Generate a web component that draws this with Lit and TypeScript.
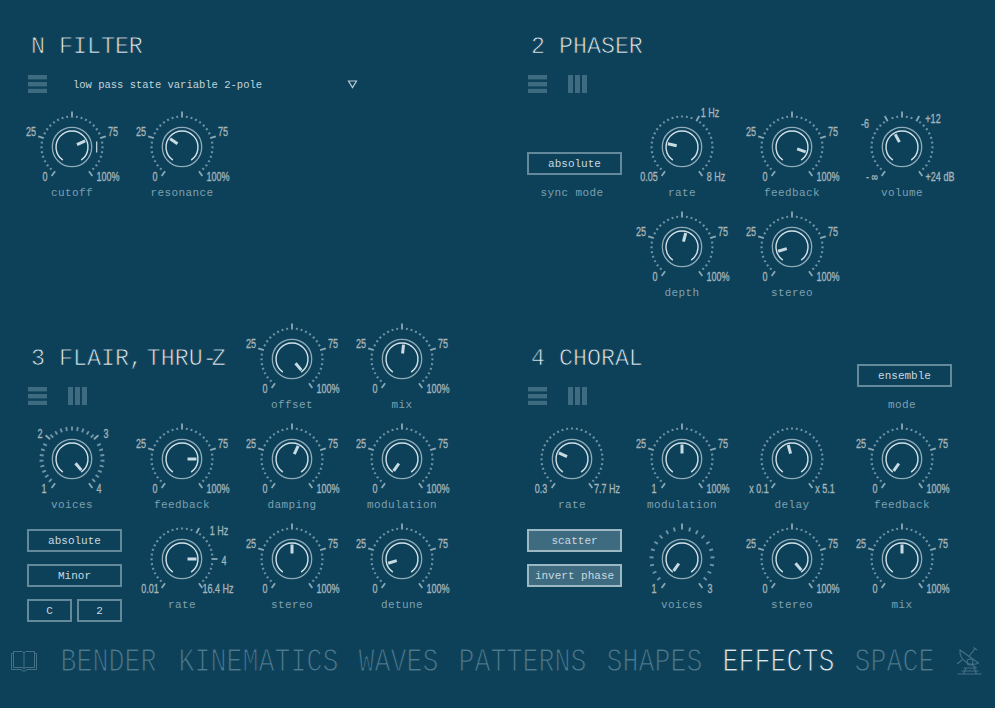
import { LitElement, html, css, svg } from "lit";
import { customElement } from "lit/decorators.js";

type Lab = [string, number, number];
interface K {
  name: string;
  v: number;
  labs?: Lab[];
  majors?: number[];
  div?: number;
  mark?: boolean;
}
const pct = (): Lab[] => [["25", -41, -16], ["75", 41, -16], ["0", -27, 29], ["100%", 36, 29]];
const R = Math.PI / 180;
const pt = (r: number, a: number) => [55 + r * Math.sin(a * R), 50 - r * Math.cos(a * R)];
const arc = (r: number, a: number, b: number) => {
  const [x1, y1] = pt(r, a);
  const [x2, y2] = pt(r, b);
  return `M${x1.toFixed(2)} ${y1.toFixed(2)}A${r} ${r} 0 ${b - a > 180 ? 1 : 0} 1 ${x2.toFixed(2)} ${y2.toFixed(2)}`;
};

function knob(k: K) {
  const div = k.div ?? 32;
  const majors = k.majors ?? [-145, -72.5, 0, 72.5, 145];
  const ticks = [];
  for (let i = 0; i <= div; i++) {
    const a = -145 + (290 * i) / div;
    if (majors.some((m) => Math.abs(m - a) < 145 / div)) continue;
    const long = div < 30 ? 2 : 1.1;
    const [x1, y1] = pt(30.5 - long, a);
    const [x2, y2] = pt(30.5 + long, a);
    ticks.push(svg`<line class="minor" x1=${x1} y1=${y1} x2=${x2} y2=${y2}></line>`);
  }
  for (const m of majors) {
    const [x1, y1] = pt(29.5, m);
    const [x2, y2] = pt(35.5, m);
    ticks.push(svg`<line class="major" x1=${x1} y1=${y1} x2=${x2} y2=${y2}></line>`);
  }
  const [px1, py1] = pt(5.5, k.v);
  const [px2, py2] = pt(14.5, k.v);
  return html`<div class="cell">
    <svg class="knob" width="110" height="88" viewBox="0 0 110 88">
      ${ticks}
      <circle class="ring" cx="55" cy="50" r="19.7"></circle>
      <path class="arc" d=${arc(16, -145, 145)}></path>
      <line class="ptr" x1=${px1} y1=${py1} x2=${px2} y2=${py2}></line>
      ${k.mark ? svg`<line class="mark" x1="79.7" y1="44.5" x2="79.7" y2="55.5"></line>` : ""}
      ${(k.labs ?? pct()).map(
        ([t, x, y]) => svg`<text class="val" transform="translate(${55 + x} ${50 + y}) scale(0.82 1.12)">${t}</text>`,
      )}
    </svg>
    <div class="lab">${k.name}</div>
  </div>`;
}

const burger = () => html`<svg class="ic" width="19" height="18" viewBox="0 0 19 18"><rect y="0" width="19" height="4.4"></rect><rect y="7" width="19" height="4.4"></rect><rect y="13.8" width="19" height="4.2"></rect></svg>`;
const cols = () => html`<svg class="ic cols" width="19" height="18" viewBox="0 0 19 18"><rect x="0" width="5" height="18"></rect><rect x="7" width="5" height="18"></rect><rect x="14" width="5" height="18"></rect></svg>`;

@customElement("app-root")
export class AppRoot extends LitElement {
  static styles = css`
    :host { display: block; width: 995px; height: 708px; background: #0d4159; overflow: hidden; font-family: "Liberation Mono", monospace; }
    .grid { display: grid; grid-template-columns: 440px 440px; column-gap: 60px; row-gap: 12px; padding-left: 17px; }
    .sec { display: grid; grid-template-columns: repeat(4, 110px); grid-template-rows: 100px 100px 100px; }
    .sec.top { grid-template-rows: 97px 100px 100px; }
    .hd { padding-top: 40px; padding-left: 14px; }
    .top .hd { padding-top: 37px; }
    .s4 { grid-column: span 4; }
    .s3 { grid-column: span 3; }
    .s2 { grid-column: span 2; }
    h2 { margin: 0; height: 20px; line-height: 20px; font-size: 23.3px; font-weight: 400; color: #e4eef2; white-space: pre; -webkit-text-stroke: 0.75px #0d4159; }
    .nar { letter-spacing: -10px; }
    .nar2 { letter-spacing: -5px; }
    .tools { display: flex; align-items: center; margin: 18px 0 0 -3px; height: 18px; }
    .ic { fill: #3f6b80; display: block; flex: none; }
    .cols { margin-left: 21px; }
    .dd { margin-left: 26px; padding-top: 2px; font-size: 10.5px; color: #c2d4dc; width: 274px; white-space: pre; }
    .tri { fill: none; stroke: #b9cdd6; stroke-width: 1.2; display: block; }
    .cell { display: flex; flex-direction: column; align-items: center; height: 100px; }
    .knob { display: block; overflow: visible; flex: none; }
    .lab { height: 12px; line-height: 12px; margin-top: 2px; font-size: 11px; letter-spacing: 0.4px; color: #7ea0b0; white-space: pre; }
    .minor { stroke: #6e94a6; stroke-width: 1.9; }
    .major { stroke: #8aa8b6; stroke-width: 1.8; }
    .ring { fill: none; stroke: #8fabb8; stroke-width: 1.3; }
    .arc { fill: none; stroke: #d3e2e8; stroke-width: 1.4; }
    .ptr { stroke: #c9dbe2; stroke-width: 3; }
    .mark { stroke: #c9dbe2; stroke-width: 1.2; }
    .val { font-family: "Liberation Sans", sans-serif; font-size: 11px; fill: #a3b4bb; stroke: #a3b4bb; stroke-width: 0.3; text-anchor: middle; dominant-baseline: central; }
    .btnbox { display: flex; flex-direction: column; align-items: flex-start; padding-left: 10px; height: 100px; }
    .pad55 { padding-top: 55px; }
    .pad20 { padding-top: 20px; gap: 12px; }
    .btnlab { width: 90px; margin-top: 12px; text-align: center; }
    .btn { box-sizing: border-box; width: 95px; height: 23px; padding-top: 1px; border: 2px solid #64899b; color: #c8d9e0; font-size: 11px; display: flex; align-items: center; justify-content: center; white-space: pre; flex: none; }
    .btn.on { background: #3f6b80; border-color: #9cb8c3; }
    .pair { display: flex; gap: 5px; }
    .btn.sm { width: 45px; }
    nav { display: flex; align-items: center; height: 52px; margin-top: 26px; padding-left: 10px; gap: 20px; }
    .book { margin-right: 2.5px; flex: none; stroke: #447186; fill: none; stroke-width: 1; }
    .sat { flex: none; stroke: #447186; fill: none; stroke-width: 1.1; margin-left: 2px; }
    .n { font-size: 26.67px; line-height: 30px; margin-top: 2px; color: #4d7b90; display: inline-block; transform: scaleY(1.22); -webkit-text-stroke: 1px #0d4159; }
    .n.first { margin-right: 2px; }
    .n.act { color: #dce8ed; -webkit-text-stroke: 0.85px #0d4159; }
  `;

  render() {
    const vMaj = [-145, -29, 0, 29, 145];
    return html`
      <div class="grid">
        <section class="sec top">
          <div class="hd s4">
            <h2>N FILTER</h2>
            <div class="tools">${burger()}
              <div class="dd">low pass state variable 2-pole</div>
              <svg class="tri" width="11" height="9" viewBox="0 0 11 9"><path d="M1.500 1H9.500L5.500 7.500Z"></path></svg>
            </div>
          </div>
          ${knob({ name: "cutoff", v: 65, mark: true })}
          ${knob({ name: "resonance", v: -55 })}
        </section>

        <section class="sec top">
          <div class="hd s4"><h2>2 PHASER</h2><div class="tools">${burger()}${cols()}</div></div>
          <div class="btnbox pad55"><div class="btn">absolute</div><div class="lab btnlab">sync mode</div></div>
          ${knob({ name: "rate", v: -77, labs: [["1 Hz", 28, -35], ["0.05", -33, 29], ["8 Hz", 34, 29]], majors: [-145, 29, 145] })}
          ${knob({ name: "feedback", v: 110 })}
          ${knob({ name: "volume", v: -28, labs: [["-6", -37, -24], ["+12", 31, -29], ["- ∞", -30, 29], ["+24 dB", 38, 29]], majors: vMaj })}
          <div></div>
          ${knob({ name: "depth", v: 15 })}
          ${knob({ name: "stereo", v: -107 })}
        </section>

        <section class="sec">
          <div class="hd s2"><h2>3 FLAIR<span class="nar">,</span> THRU<span class="nar2">-</span>Z</h2><div class="tools">${burger()}${cols()}</div></div>
          ${knob({ name: "offset", v: 140 })}
          ${knob({ name: "mix", v: 6 })}
          ${knob({ name: "voices", v: 140, div: 28, labs: [["1", -28, 29], ["4", 27, 29], ["2", -32, -26], ["3", 34, -26]], majors: [-145, -48, 48, 145] })}
          ${knob({ name: "feedback", v: 90 })}
          ${knob({ name: "damping", v: 25 })}
          ${knob({ name: "modulation", v: -145 })}
          <div class="btnbox pad20">
            <div class="btn">absolute</div>
            <div class="btn">Minor</div>
            <div class="pair"><div class="btn sm">C</div><div class="btn sm">2</div></div>
          </div>
          ${knob({ name: "rate", v: 90, labs: [["1 Hz", 37, -29], ["4", 42, 1], ["0.01", -32, 29], ["16.4 Hz", 36, 29]], majors: [-145, 29, 90, 145] })}
          ${knob({ name: "stereo", v: 0 })}
          ${knob({ name: "detune", v: -107 })}
        </section>

        <section class="sec">
          <div class="hd s3"><h2>4 CHORAL</h2><div class="tools">${burger()}${cols()}</div></div>
          <div class="btnbox pad55"><div class="btn">ensemble</div><div class="lab btnlab">mode</div></div>
          ${knob({ name: "rate", v: -65, labs: [["0.3", -31, 29], ["7.7 Hz", 35, 29]], majors: [-145, 145] })}
          ${knob({ name: "modulation", v: 0, labs: [["25", -41, -16], ["75", 41, -16], ["1", -28, 29], ["100%", 36, 29]] })}
          ${knob({ name: "delay", v: -15, labs: [["x 0.1", -33, 29], ["x 5.1", 33, 29]], majors: [-145, 145] })}
          ${knob({ name: "feedback", v: -145 })}
          <div class="btnbox pad20">
            <div class="btn on">scatter</div>
            <div class="btn on">invert phase</div>
          </div>
          ${knob({ name: "voices", v: -145, div: 20, labs: [["1", -28, 29], ["3", 28, 29]], majors: [-145, 0, 145] })}
          ${knob({ name: "stereo", v: 140 })}
          ${knob({ name: "mix", v: 0 })}
        </section>
      </div>
      <nav>
        <svg class="book" width="28" height="22" viewBox="0 0 28 22">
          <path d="M3.500 1.500H12.500L14 3L15.500 1.500H24.500V17.500H15.500L14 19L12.500 17.500H3.500Z"></path>
          <path d="M14 3V19M1.500 3.500H3.500M24.500 3.500H26.500M1.500 3.500V19.500H11.500L12.500 21H15.500L16.500 19.500H26.500V3.500"></path>
        </svg>
        <span class="n first">BENDER</span><span class="n">KINEMATICS</span><span class="n">WAVES</span><span class="n">PATTERNS</span><span class="n">SHAPES</span><span class="n act">EFFECTS</span><span class="n">SPACE</span>
        <svg class="sat" width="26" height="28" viewBox="0 0 26 28">
          <path d="M4 3L22.500 16C15 20 3 14 4 3Z"></path>
          <path d="M13 9.500L19 1.500M17.500 0.500L21 3M1 17L6 13M16 18L20.500 21"></path>
          <circle cx="14" cy="15" r="3"></circle>
          <path d="M7.500 21H20.500M5.500 24H22.500M1.500 27H25.500M10 21L7.500 27M18 21L20.500 27"></path>
        </svg>
      </nav>
    `;
  }
}
